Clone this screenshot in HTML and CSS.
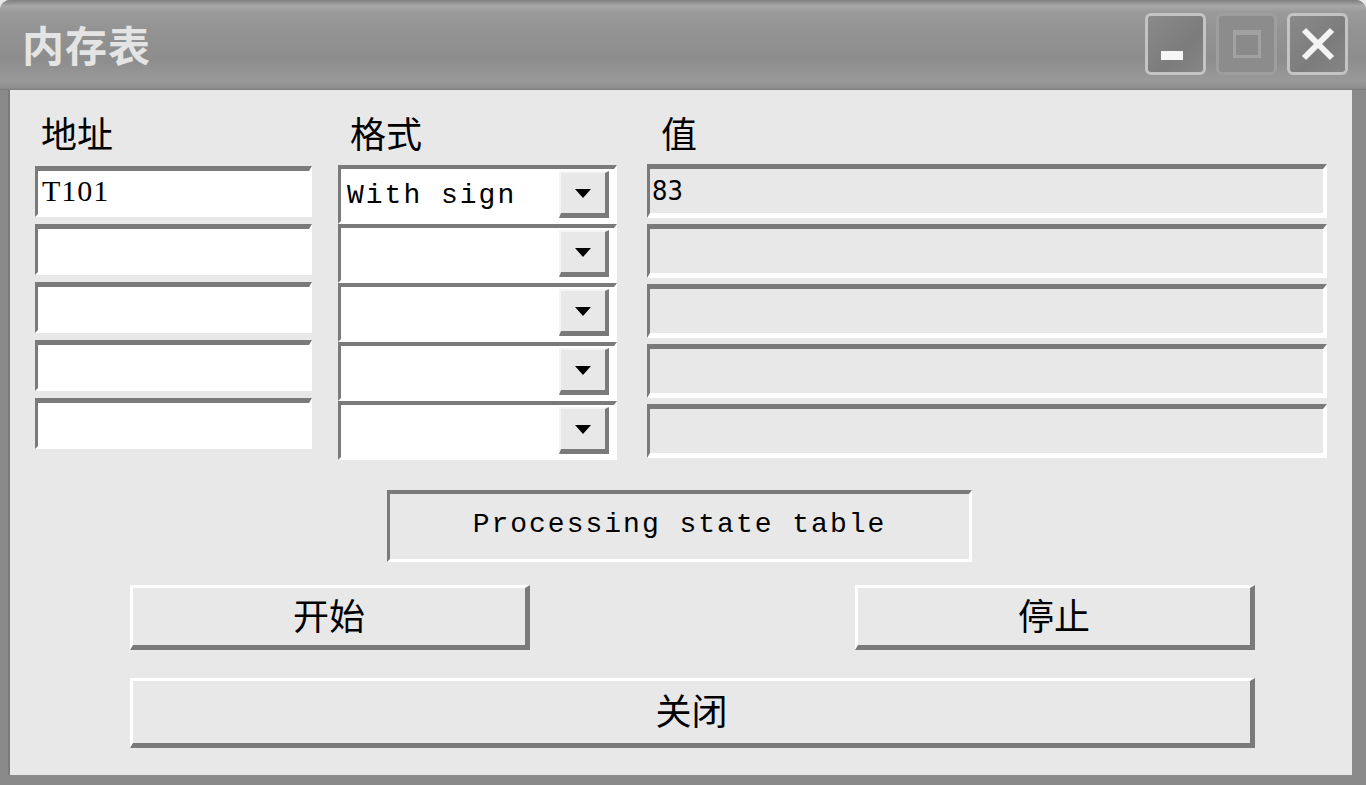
FILE: index.html
```html
<!DOCTYPE html>
<html lang="zh">
<head>
<meta charset="utf-8">
<title>内存表</title>
<link rel="stylesheet" href="styles.css">
</head>
<body>
<div class="window">
  <div class="titlebar">
    <div class="title">内存表</div>
    <div class="caption-buttons">
      <div class="cap-btn"><span class="min-bar"></span></div>
      <div class="cap-btn disabled"><span class="max-box"></span></div>
      <div class="cap-btn">
        <svg width="40" height="40" viewBox="0 0 40 40"><path d="M6 6 L34 34 M34 6 L6 34" stroke="#f4f4f4" stroke-width="6" fill="none"/></svg>
      </div>
    </div>
  </div>
  <div class="client">
    <div class="columns">
      <div class="col col-addr">
        <div class="label">地址</div>
        <div class="field white addr">T101</div>
        <div class="field white"></div>
        <div class="field white"></div>
        <div class="field white"></div>
        <div class="field white"></div>
      </div>
      <div class="col col-fmt">
        <div class="label">格式</div>
        <div class="combo"><span class="combo-text">With sign</span><span class="drop"><span class="tri"></span></span></div>
        <div class="combo"><span class="combo-text"></span><span class="drop"><span class="tri"></span></span></div>
        <div class="combo"><span class="combo-text"></span><span class="drop"><span class="tri"></span></span></div>
        <div class="combo"><span class="combo-text"></span><span class="drop"><span class="tri"></span></span></div>
        <div class="combo"><span class="combo-text"></span><span class="drop"><span class="tri"></span></span></div>
      </div>
      <div class="col col-val">
        <div class="label">值</div>
        <div class="field grey num">83</div>
        <div class="field grey"></div>
        <div class="field grey"></div>
        <div class="field grey"></div>
        <div class="field grey"></div>
      </div>
    </div>
    <div class="status-row">
      <div class="status">Processing state table</div>
    </div>
    <div class="btn-row">
      <div class="btn">开始</div>
      <div class="btn">停止</div>
    </div>
    <div class="btn-row">
      <div class="btn wide">关闭</div>
    </div>
  </div>
</div>
</body>
</html>
```
FILE: styles.css
```css
html, body {
  margin: 0;
  padding: 0;
  background: #e8e8e8;
}
body {
  width: 1366px;
  height: 785px;
  overflow: hidden;
  font-family: "Noto Sans CJK SC", "Liberation Sans", sans-serif;
}
.window {
  width: 1366px;
  height: 785px;
  display: flex;
  flex-direction: column;
  box-sizing: border-box;
  border-radius: 10px 10px 0 0;
  overflow: hidden;
  background: #8a8a8a;
}
.titlebar {
  height: 90px;
  flex: none;
  display: flex;
  align-items: center;
  justify-content: space-between;
  padding: 0 18px 0 22px;
  box-sizing: border-box;
  background: linear-gradient(#7e7e7e 0px, #a8a8a8 6px, #9a9a9a 12px, #939393 30px, #8d8d8d 60px, #999999 80px, #8f8f8f 88px, #7a7a7a 90px);
}
.title {
  color: #e4e4e4;
  font-size: 42px;
  font-weight: 700;
  letter-spacing: 1px;
  margin-top: -4px;
}
.caption-buttons {
  display: flex;
  gap: 10px;
  margin-top: -2px;
}
.cap-btn {
  width: 61px;
  height: 62px;
  box-sizing: border-box;
  border: 3px solid #c4c4c4;
  border-radius: 6px;
  background: linear-gradient(135deg, #8a8a8a, #7c7c7c 60%, #858585);
  display: flex;
  align-items: center;
  justify-content: center;
  position: relative;
}
.cap-btn.disabled {
  border-color: #9e9e9e;
  background: #8c8c8c;
}
.min-bar {
  position: absolute;
  left: 13px;
  bottom: 12px;
  width: 22px;
  height: 9px;
  background: #f6f6f6;
}
.max-box {
  width: 28px;
  height: 28px;
  box-sizing: border-box;
  border: 3px solid #a2a2a2;
  border-top-width: 5px;
  background: #8a8a8a;
}
.client {
  flex: 1;
  background: #e8e8e8;
  margin: 0 14px 10px 8px;
  border-left: 2px solid #7a7a7a;
  display: flex;
  flex-direction: column;
  padding: 22px 0 0 25px;
  box-sizing: border-box;
}
.columns {
  display: flex;
  gap: 26px;
  align-items: flex-start;
}
.col {
  display: flex;
  flex-direction: column;
}
.col-addr { width: 277px; gap: 7px; }
.col-fmt { width: 279px; gap: 0; }
.col-val { width: 680px; gap: 6px; margin-left: 4px; }
.label {
  font-size: 36px;
  line-height: 40px;
  height: 40px;
  padding-left: 6px;
  color: #000;
  margin-bottom: 7px;
}
.col-fmt .label { padding-left: 12px; margin-bottom: 13px; }
.col-val .label { padding-left: 14px; margin-bottom: 6px; }
.field {
  height: 51px;
  box-sizing: border-box;
  border-top: 5px solid #7a7a7a;
  border-left: 3px solid #7a7a7a;
  border-bottom: 3px solid #ffffff;
  border-right: 3px solid #ffffff;
  font-family: "Liberation Mono", "DejaVu Sans Mono", monospace;
  font-size: 28px;
  line-height: 40px;
  padding-left: 4px;
  color: #000;
}
.field.addr {
  font-family: "Liberation Serif", serif;
  font-size: 30px;
  letter-spacing: 1px;
}
.field.white { background: #ffffff; }
.field.grey { background: #e8e8e8; height: 54px; border-bottom-width: 5px; border-right-width: 4px; }
.field.num {
  font-family: "DejaVu Sans Condensed", "Liberation Sans Narrow", sans-serif;
  font-size: 27px;
  line-height: 44px;
  padding-left: 2px;
}
.combo {
  height: 59px;
  box-sizing: border-box;
  border-top: 4px solid #7a7a7a;
  border-left: 3px solid #7a7a7a;
  border-bottom: 3px solid #ffffff;
  border-right: 3px solid #ffffff;
  background: #ffffff;
  display: flex;
  align-items: stretch;
  padding: 2px 5px 3px 0;
}
.combo-text {
  flex: 1;
  font-family: "Liberation Mono", "DejaVu Sans Mono", monospace;
  font-size: 28px;
  line-height: 50px;
  padding-left: 6px;
  letter-spacing: 2px;
  color: #000;
}
.drop {
  width: 50px;
  box-sizing: border-box;
  background: #e8e8e8;
  border-top: 2px solid #f4f4f4;
  border-left: 2px solid #f4f4f4;
  border-right: 4px solid #7a7a7a;
  border-bottom: 5px solid #7a7a7a;
  display: flex;
  align-items: center;
  justify-content: center;
}
.tri {
  width: 0;
  height: 0;
  border-left: 8px solid transparent;
  border-right: 8px solid transparent;
  border-top: 9px solid #000;
}
.status-row {
  display: flex;
  padding-left: 352px;
  margin-top: 30px;
}
.status {
  width: 585px;
  height: 72px;
  box-sizing: border-box;
  border-top: 4px solid #7a7a7a;
  border-left: 3px solid #7a7a7a;
  border-bottom: 3px solid #ffffff;
  border-right: 3px solid #ffffff;
  background: #e8e8e8;
  display: flex;
  align-items: center;
  justify-content: center;
  font-family: "Liberation Mono", "DejaVu Sans Mono", monospace;
  font-size: 28px;
  letter-spacing: 2px;
  color: #000;
  padding-bottom: 4px;
}
.btn-row {
  display: flex;
  justify-content: space-between;
  padding-left: 95px;
  width: 1125px;
  box-sizing: content-box;
  margin-top: 23px;
}
.btn-row + .btn-row { margin-top: 28px; }
.btn {
  width: 400px;
  height: 65px;
  box-sizing: border-box;
  border-top: 3px solid #ffffff;
  border-left: 3px solid #ffffff;
  border-right: 5px solid #7a7a7a;
  border-bottom: 5px solid #7a7a7a;
  background: #e8e8e8;
  display: flex;
  align-items: center;
  justify-content: center;
  font-size: 36px;
  color: #000;
  padding-bottom: 6px;
}
.btn.wide {
  width: 1125px;
  height: 70px;
}
```
